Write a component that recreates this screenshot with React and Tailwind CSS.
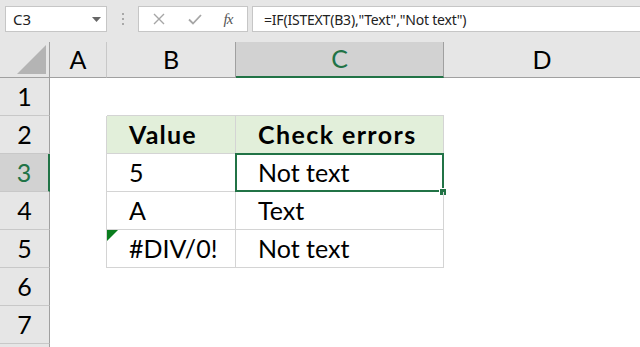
import React from 'react';

const green = '#217346';

const RowHead = ({ n, selected }) => (
  <div
    className={`flex items-center justify-center border-b border-[#c8c8c8] text-[25px] ${
      selected
        ? 'bg-[#d2d2d2] text-[#217346] border-r-2 border-r-[#217346]'
        : 'bg-[#e6e6e6] text-black border-r border-r-[#a0a0a0]'
    }`}
  >
    {n}
  </div>
);

const Cell = ({ children, className = '' }) => (
  <div className={`relative flex items-center pl-[22px] text-[25px] text-black ${className}`}>{children}</div>
);

export default function App() {
  return (
    <div className="w-[640px] h-[347px] overflow-hidden bg-white font-['Lato',sans-serif]">
      {/* formula bar */}
      <div className="h-[42px] bg-[#e6e6e6] flex items-start pt-[6px] pl-[5px]">
        <div className="w-[102px] h-[26px] bg-white border border-[#c6c6c6] flex items-center justify-between pl-[7px] pr-[5px]">
          <span className="text-[15px] text-[#222] font-['Noto_Sans',sans-serif]">C3</span>
          <svg width="9" height="5" viewBox="0 0 9 5"><path d="M0 0H9L4.5 5Z" fill="#666" /></svg>
        </div>
        <div className="w-[31px] h-[26px] flex flex-col items-center justify-center gap-[3px]">
          <div className="w-[2px] h-[2px] bg-[#a8a8a8]" />
          <div className="w-[2px] h-[2px] bg-[#a8a8a8]" />
          <div className="w-[2px] h-[2px] bg-[#a8a8a8]" />
        </div>
        <div className="w-[110px] h-[26px] bg-white border border-[#c6c6c6] flex items-center">
          <div className="w-[40px] flex justify-center">
            <svg width="12" height="12" viewBox="0 0 12 12"><path d="M1 1L11 11M11 1L1 11" stroke="#a6a6a6" strokeWidth="1.4" /></svg>
          </div>
          <div className="w-[32px] flex justify-center">
            <svg width="14" height="11" viewBox="0 0 14 11"><path d="M1 5.5L5 9.5L13 1" stroke="#a6a6a6" strokeWidth="1.8" fill="none" /></svg>
          </div>
          <div className="flex-1 flex justify-center pr-[2px]">
            <span className="text-[15px] italic text-[#555] font-['Liberation_Serif',serif] tracking-[-1px]">fx</span>
          </div>
        </div>
        <div className="ml-[4px] flex-1 h-[26px] bg-white border border-r-0 border-[#c6c6c6] flex items-center pl-[11px]">
          <span className="text-[14px] text-[#222] font-['Noto_Sans',sans-serif] tracking-[-0.2px]">
            =IF(ISTEXT(B3),"Text","Not text")
          </span>
        </div>
      </div>

      {/* sheet */}
      <div className="grid grid-cols-[50px_57px_129px_208px_196px] grid-rows-[36px_repeat(8,38px)]">
        {/* column headers */}
        <div className="bg-[#e6e6e6] border-r border-r-[#a0a0a0] border-b border-b-[#a0a0a0] flex items-end justify-end pb-[3px] pr-[3px]">
          <svg width="29" height="29" viewBox="0 0 29 29"><path d="M29 0V29H0Z" fill="#b4b4b4" /></svg>
        </div>
        <div className="bg-[#e6e6e6] border-r border-r-[#c8c8c8] border-b border-b-[#a0a0a0] flex items-center justify-center text-[25px] text-black">A</div>
        <div className="bg-[#e6e6e6] border-r border-r-[#a0a0a0] border-b border-b-[#a0a0a0] flex items-center justify-center text-[25px] text-black">B</div>
        <div className="bg-[#d2d2d2] border-r border-r-[#a0a0a0] border-b-2 border-b-[#217346] flex items-center justify-center text-[25px] text-[#217346]">C</div>
        <div className="bg-[#e6e6e6] border-b border-b-[#a0a0a0] flex items-center justify-center text-[25px] text-black">D</div>

        {/* row 1 */}
        <RowHead n={1} />
        <div />
        <div className="border-b border-[#d4d4d4]" />
        <div className="border-b border-[#d4d4d4]" />
        <div />

        {/* row 2 */}
        <RowHead n={2} />
        <div className="border-r border-[#d4d4d4]" />
        <Cell className="bg-[#e2efda] border-r border-b border-[#d4d4d4] font-bold tracking-[1.2px]">Value</Cell>
        <Cell className="bg-[#e2efda] border-r border-b border-[#d4d4d4] font-bold tracking-[1.4px]">Check errors</Cell>
        <div />

        {/* row 3 */}
        <RowHead n={3} selected />
        <div className="border-r border-[#d4d4d4]" />
        <Cell className="border-r border-b border-[#d4d4d4]">5</Cell>
        <Cell className="border-r border-b border-[#d4d4d4]">
          Not text
          <div className="absolute -left-px -top-px -right-px -bottom-px border-2" style={{ borderColor: green }} />
          <div className="absolute -right-[4px] -bottom-[5px] w-[8px] h-[8px] bg-white p-px">
            <div className="w-full h-full" style={{ background: green }} />
          </div>
        </Cell>
        <div />

        {/* row 4 */}
        <RowHead n={4} />
        <div className="border-r border-[#d4d4d4]" />
        <Cell className="border-r border-b border-[#d4d4d4]">A</Cell>
        <Cell className="border-r border-b border-[#d4d4d4]">Text</Cell>
        <div />

        {/* row 5 */}
        <RowHead n={5} />
        <div className="border-r border-[#d4d4d4]" />
        <Cell className="border-r border-b border-[#d4d4d4]">
          <svg className="absolute left-0 top-0" width="11" height="11" viewBox="0 0 11 11"><path d="M0 0H11L0 11Z" fill="#0a7d1e" /></svg>
          #DIV/0!
        </Cell>
        <Cell className="border-r border-b border-[#d4d4d4]">Not text</Cell>
        <div />

        {/* rows 6-7 */}
        {[6, 7].map((n) => (
          <React.Fragment key={n}>
            <RowHead n={n} />
            <div />
            <div />
            <div />
            <div />
          </React.Fragment>
        ))}

        {/* row 8, only its top edge shows */}
        <div className="bg-[#e6e6e6] border-r border-r-[#a0a0a0]" />
        <div />
        <div />
        <div />
        <div />
      </div>
    </div>
  );
}
